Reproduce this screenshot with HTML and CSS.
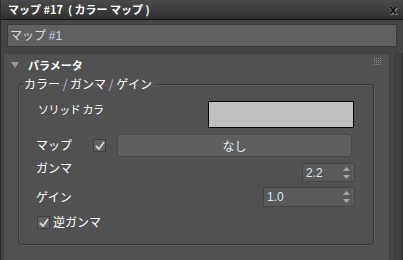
FILE: index.html
```html
<!DOCTYPE html>
<html lang="ja">
<head>
<meta charset="utf-8">
<link rel="stylesheet" href="styles.css">
</head>
<body>
<div class="titlebar">
  <span class="title">マップ #17 &nbsp;(&nbsp;カラー マップ&nbsp;)</span>
  <span class="close">x</span>
</div>
<div class="namefield">マップ <span class="num">#1</span></div>
<div class="main">
  <div class="rollout">
    <div class="rollhead">
      <svg class="tri" width="8" height="6" viewBox="0 0 8 6"><path d="M0 0H8L4 6Z" fill="#9a9a9a"/></svg>
      <span class="rolltitle">パラメータ</span>
      <svg class="grip" width="8" height="8" viewBox="0 0 8 8">
        <g fill="#8a8a8a">
          <rect x="0" y="0" width="1" height="1"/><rect x="2" y="0" width="1" height="1"/><rect x="4" y="0" width="1" height="1"/><rect x="6" y="0" width="1" height="1"/>
          <rect x="0" y="2" width="1" height="1"/><rect x="2" y="2" width="1" height="1"/><rect x="4" y="2" width="1" height="1"/><rect x="6" y="2" width="1" height="1"/>
          <rect x="0" y="4" width="1" height="1"/><rect x="2" y="4" width="1" height="1"/><rect x="4" y="4" width="1" height="1"/><rect x="6" y="4" width="1" height="1"/>
          <rect x="0" y="6" width="1" height="1"/><rect x="2" y="6" width="1" height="1"/><rect x="4" y="6" width="1" height="1"/><rect x="6" y="6" width="1" height="1"/>
        </g>
      </svg>
    </div>
    <fieldset class="group">
      <legend class="legend">カラー <span class="slash">/</span> ガンマ <span class="slash">/</span> ゲイン</legend>
      <div class="row row-solid">
        <span class="lbl lbl-solid">ソリッド カラ</span>
        <div class="swatch"></div>
      </div>
      <div class="row row-map">
        <span class="lbl lbl-map">マップ</span>
        <span class="check"><svg width="10" height="9" viewBox="0 0 10 9"><path d="M1 5L4 8L9 1" stroke="#d0d0d0" stroke-width="2" fill="none"/></svg></span>
        <button class="mapbtn">なし</button>
      </div>
      <div class="row row-gamma">
        <span class="lbl lbl-gamma">ガンマ</span>
        <div class="spinner sp-gamma"><span class="val">2.2</span><span class="arrows"><svg width="7" height="12" viewBox="0 0 7 12"><path d="M3.5 0L7 4H0Z M0 8H7L3.5 12Z" fill="#a8a8a8"/></svg></span></div>
      </div>
      <div class="row row-gain">
        <span class="lbl">ゲイン</span>
        <div class="spinner sp-gain"><span class="val">1.0</span><span class="arrows"><svg width="7" height="12" viewBox="0 0 7 12"><path d="M3.5 0L7 4H0Z M0 8H7L3.5 12Z" fill="#a8a8a8"/></svg></span></div>
      </div>
      <div class="row row-inv">
        <span class="check"><svg width="10" height="9" viewBox="0 0 10 9"><path d="M1 5L4 8L9 1" stroke="#d0d0d0" stroke-width="2" fill="none"/></svg></span>
        <span class="lbl lbl-inv">逆ガンマ</span>
      </div>
    </fieldset>
  </div>
  <div class="scroll"></div>
</div>
</body>
</html>
```
FILE: styles.css
```css
* { box-sizing: border-box; }
html, body { margin: 0; padding: 0; }
body {
  width: 403px; height: 260px; overflow: hidden;
  background: #454545;
  font-family: "Noto Sans CJK JP", "Noto Sans", sans-serif;
  font-size: 12px;
  color: #f2f2f2;
  border-left: 1px solid #2a2a2a;
}
.titlebar {
  height: 20px;
  display: flex; align-items: center; justify-content: space-between;
  padding: 0 6px 0 7px;
  background: linear-gradient(#4a4a4a, #303030);
  border-bottom: 1px solid #141414;
}
.title { font-weight: bold; color: #fff; font-size: 11px; line-height: 19px; }
.close { font-weight: bold; color: #111; font-size: 12px; text-shadow: 0 0 1px #aaa, 1px 1px 0 #888; font-family: "DejaVu Sans", sans-serif; }
.namefield {
  margin: 4px 6px 0 6px;
  height: 23px;
  background: #606060;
  border: 1px solid #3a3a3a;
  padding-left: 2px;
  line-height: 20px;
  color: #d8d8d8;
  font-size: 12px;
}
.num { color: #cfd8e8; font-family: "Liberation Sans", sans-serif; }
.main { display: flex; margin-top: 6px; height: 210px; }
.rollout {
  margin-left: 2px;
  width: 387px;
  background: #515151;
  border: 1px solid #414141;
  border-radius: 4px 4px 0 0;
  padding: 0 15px 0 14px;
}
.rollhead {
  height: 21px;
  display: flex; align-items: center;
  margin-left: -7px; margin-right: -8px;
}
.tri { margin-right: 9px; margin-top: 1px; }
.rolltitle { font-weight: bold; color: #fff; flex: 1; font-size: 11px; }
.grip { margin-top: -5px; }
.group {
  margin: 2px 0 0 0;
  padding: 0;
  height: 168px;
  border: 1px solid #3a3a3a;
  border-radius: 3px;
  box-shadow: inset 1px 1px 0 #5c5c5c, 1px 1px 0 #5c5c5c;
  min-width: 0;
}
.legend { padding: 0 2px 0 1px; margin-left: 4px; color: #fff; line-height: 14px; }
.slash { color: #aac4ff; }
.row { display: flex; align-items: center; }
.lbl { color: #fff; line-height: 14px; }
.row-solid { margin-top: 10px; height: 27px; padding-left: 19px; align-items: flex-start; }
.lbl-solid { margin-top: 1px; font-size: 11px; letter-spacing: -0.4px; }
.swatch { margin-left: auto; margin-right: 19px; width: 146px; height: 27px; background: #c0c0c0; border: 1px solid #000; }
.row-map { margin-top: 6px; height: 23px; padding-left: 17px; }
.lbl-map { width: 57px; margin-top: -2px; }
.check {
  width: 13px; height: 13px;
  background: #5f5f5f;
  border: 1px solid #3e3e3e;
  display: flex; align-items: center; justify-content: center;
}
.mapbtn {
  margin-left: 11px; margin-right: 21px;
  flex: 1; height: 23px;
  background: #5f5f5f;
  border: 1px solid #474747;
  border-radius: 4px;
  color: #e8e8e8;
  font-family: inherit; font-size: 12px;
  padding: 0;
}
.row-gamma { margin-top: 6px; height: 19px; padding-left: 17px; }
.lbl-gamma { margin-top: -9px; }
.row-gain { margin-top: 5px; height: 20px; padding-left: 17px; }
.spinner {
  margin-left: auto; margin-right: 18px;
  height: 100%;
  background: #5a5a5a;
  border: 1px solid #434343;
  display: flex; align-items: center; justify-content: space-between;
  padding: 0 4px 0 3px;
  font-family: "Liberation Sans", sans-serif;
  color: #dde6f0;
}
.sp-gamma { width: 53px; }
.sp-gain { width: 92px; }
.arrows { display: flex; }
.row-inv { margin-top: 8px; height: 14px; padding-left: 18px; }
.lbl-inv { margin-left: 3px; }
.scroll {
  margin-left: 2px;
  width: 11px;
  background: #3e3e3e;
  border-left: 1px solid #4a4a4a;
  border-right: 1px solid #2e2e2e;
}
```
